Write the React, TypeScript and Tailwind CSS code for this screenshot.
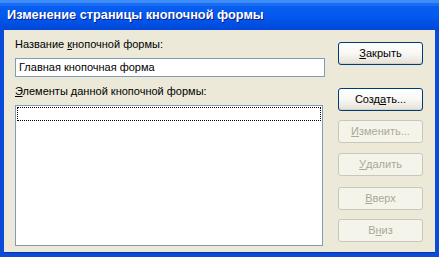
import React from "react";

const font = { fontFamily: '"Liberation Sans", Arial, sans-serif' };

function U({ children }: { children: React.ReactNode }) {
  return <span className="underline underline-offset-[1px] decoration-1">{children}</span>;
}

function Btn({ children, disabled, className = "" }: { children: React.ReactNode; disabled?: boolean; className?: string }) {
  return (
    <div
      className={
        "h-[23px] w-[85px] rounded-[3px] border flex items-center justify-center text-[11px] leading-none " +
        (disabled
          ? "border-[#C9C7BA] bg-[#F5F4EA] text-[#ACA899] "
          : "border-[#003C74] bg-gradient-to-b from-[#FFFFFF] via-[#F8F7F3] to-[#E3E1D8] text-black shadow-[inset_0_-1px_0_#D6D0C5] ") +
        className
      }
    >
      {children}
    </div>
  );
}

export default function App() {
  return (
    <div className="w-[439px] h-[257px] flex flex-col bg-[#0A4BD8] overflow-hidden" style={font}>
      <div className="h-[30px] shrink-0 flex items-center pl-[7px] bg-gradient-to-b from-[#0A60EC] via-[#045AF0] to-[#0048DA] relative">
        <div className="absolute inset-x-0 top-0 h-[3px] bg-[#3D8DF8]" />
        <div className="absolute inset-x-0 top-[3px] h-[3px] bg-[#1A6CF5]" />
        <span className="relative text-white font-bold text-[12.75px] [text-shadow:1px_1px_0_#0A1E8C]">
          Изменение страницы кнопочной формы
        </span>
      </div>
      <div className="flex-1 flex mx-[4px] mb-[4px] bg-[#ECE9D8] border-b border-[#0831A9]">
        <div className="flex flex-col pl-[11px] pt-[8px] w-[322px] text-[11px]">
          <div className="h-[13px] leading-[13px] text-black">
            Название <U>к</U>нопочной формы:
          </div>
          <div className="mt-[7px] h-[19px] w-[310px] border border-[#7F9DB9] bg-white flex items-center pl-[3px] text-black">
            Главная кнопочная форма
          </div>
          <div className="mt-[8px] h-[13px] leading-[13px] text-black">
            <U>Э</U>лементы данной кнопочной формы:
          </div>
          <div className="mt-[7px] h-[141px] w-[308px] border border-[#7F9DB9] bg-white p-[1px]">
            <div className="h-[14px] border border-dotted border-black" />
          </div>
        </div>
        <div className="flex flex-col pl-[12px] pt-[12px]">
          <Btn>
            <U>З</U>акрыть
          </Btn>
          <Btn className="mt-[23px]">
            Созд<U>а</U>ть...
          </Btn>
          <Btn disabled className="mt-[9px]">
            <U>И</U>зменить...
          </Btn>
          <Btn disabled className="mt-[10px]">
            <U>У</U>далить
          </Btn>
          <Btn disabled className="mt-[11px]">
            <U>В</U>верх
          </Btn>
          <Btn disabled className="mt-[9px]">
            В<U>н</U>из
          </Btn>
        </div>
      </div>
    </div>
  );
}
